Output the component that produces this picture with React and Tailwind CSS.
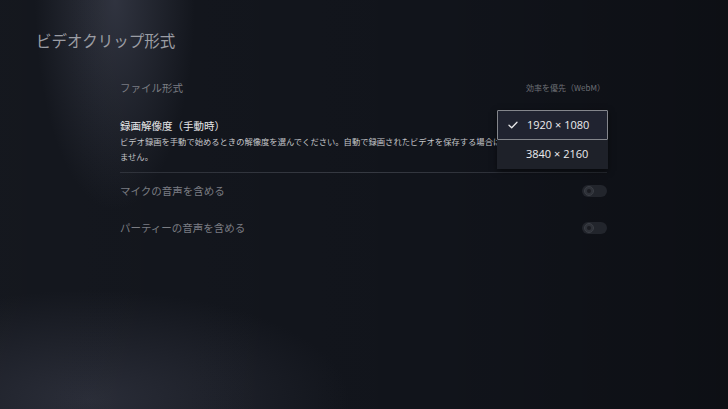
import React from "react";

const jp = { fontFamily: '"Noto Sans CJK JP", "Noto Sans", sans-serif' };

function Toggle() {
  return (
    <div className="w-[25px] h-[12px] rounded-full bg-[#22252c] flex items-center pl-[2px]">
      <div className="w-[10px] h-[10px] rounded-full bg-[#2e3138] border border-[#3a3d44] flex items-center justify-center">
        <div className="w-[4px] h-[4px] rounded-full bg-[#1a1c22]" />
      </div>
    </div>
  );
}

export default function App() {
  return (
    <div
      className="relative w-[728px] h-[409px] overflow-hidden bg-[#11141b]"
      style={jp}
    >
      {/* background light effects */}
      <div className="absolute inset-0 bg-[radial-gradient(ellipse_80px_210px_at_115px_0px,rgba(70,74,90,0.55),transparent)]" />
      <div className="absolute inset-0 bg-[radial-gradient(ellipse_260px_110px_at_90px_400px,rgba(55,58,72,0.6),transparent)]" />
      <div className="absolute inset-0 bg-[linear-gradient(90deg,rgba(255,255,255,0.015),transparent_60%,rgba(0,0,0,0.25))]" />

      <div className="relative">
        <div className="pt-[30px] pl-[36px] text-[15.5px] leading-[20px] text-[#9b9da4]">
          ビデオクリップ形式
        </div>

        <div className="ml-[120px] w-[487px] mt-[28px]">
          <div className="flex items-center justify-between h-[20px] leading-[20px]">
            <span className="text-[10.5px] text-[#7b7d83]">ファイル形式</span>
            <span className="text-[8px] text-[#6d6f75] mr-[2px]">効率を優先（WebM）</span>
          </div>

          <div className="mt-[20px] text-[10.5px] leading-[16px] text-[#e6e6e8]">
            録画解像度（手動時）
          </div>
          <div className="text-[8.3px] leading-[15px] text-[#c4c5c9] whitespace-nowrap overflow-hidden">
            <div>ビデオ録画を手動で始めるときの解像度を選んでください。自動で録画されたビデオを保存する場合は、この設定は適用され</div>
            <div>ません。</div>
          </div>
          <div className="mt-[8px] h-px bg-[linear-gradient(90deg,rgba(90,94,104,0.35),rgba(90,94,104,0.5)_50%,rgba(90,94,104,0.3))]" />

          <div className="mt-[8px] flex items-center justify-between h-[20px]">
            <span className="text-[10.5px] text-[#7b7d83]">マイクの音声を含める</span>
            <Toggle />
          </div>
          <div className="mt-[17px] flex items-center justify-between h-[20px]">
            <span className="text-[10.5px] text-[#7b7d83]">パーティーの音声を含める</span>
            <Toggle />
          </div>
        </div>
      </div>

      {/* dropdown */}
      <div className="absolute left-[497px] top-[110px] w-[111px] h-[59px] bg-[#1e2129] shadow-[0_2px_6px_rgba(0,0,0,0.5)]">
        <div className="h-[30px] border border-[#84868c] rounded-[1px] flex items-center bg-[#202330]">
          <svg className="ml-[10px]" width="10" height="8" viewBox="0 0 10 8" fill="none">
            <path d="M1 4.2 L3.7 6.8 L9 1.2" stroke="#e8e8ea" strokeWidth="1.3" strokeLinecap="round" strokeLinejoin="round" />
          </svg>
          <span
            className="ml-[9px] text-[11px] text-[#ececee]"
            style={{ fontFamily: '"Open Sans", "Noto Sans", sans-serif' }}
          >
            1920 × 1080
          </span>
        </div>
        <div className="h-[28px] flex items-center">
          <span
            className="ml-[29px] text-[11px] text-[#ececee]"
            style={{ fontFamily: '"Open Sans", "Noto Sans", sans-serif' }}
          >
            3840 × 2160
          </span>
        </div>
      </div>
    </div>
  );
}
